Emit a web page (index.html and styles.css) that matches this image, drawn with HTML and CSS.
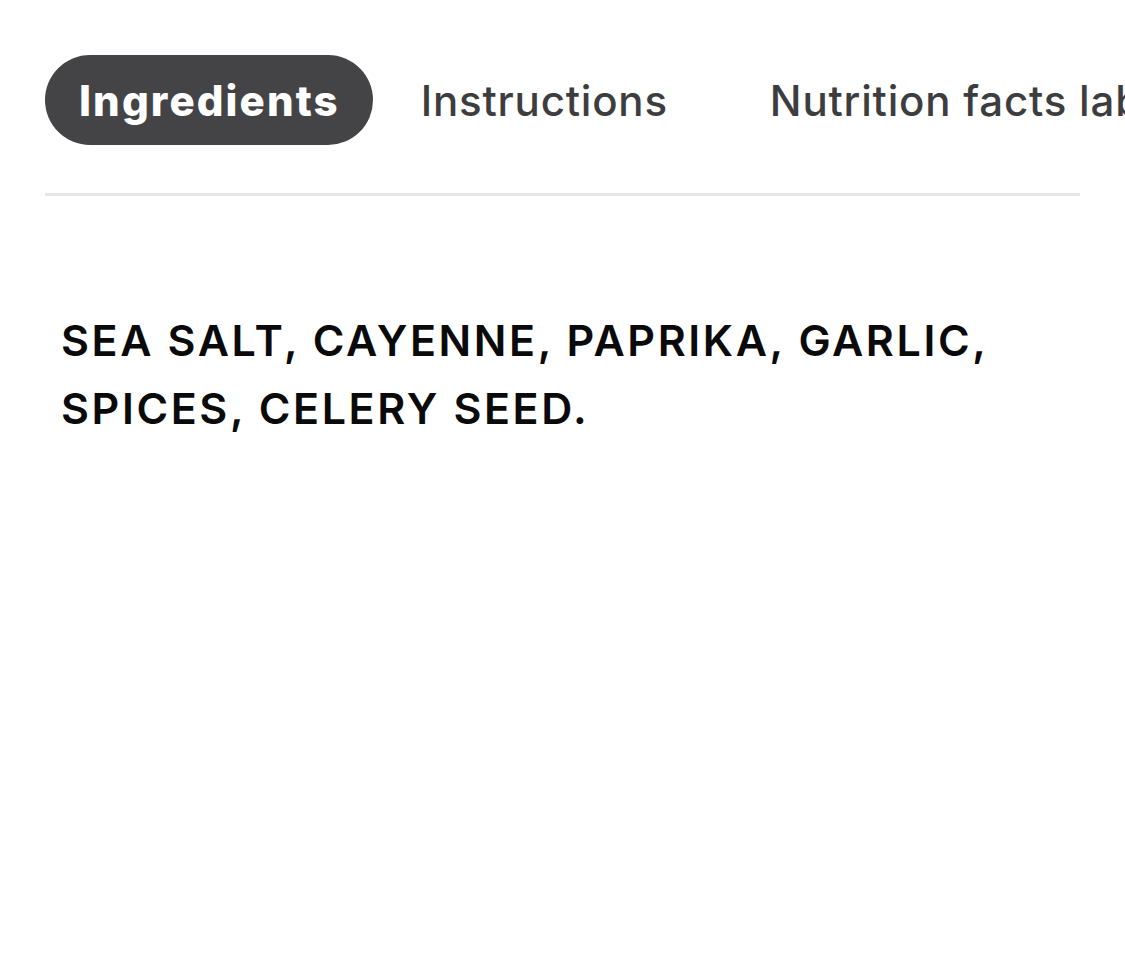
FILE: index.html
```html
<!DOCTYPE html>
<html lang="en">
<head>
<meta charset="utf-8">
<title>Product details</title>
<link rel="stylesheet" href="styles.css">
</head>
<body>
<div class="page">
  <nav class="tabs">
    <span class="tab tab-active">Ingredients</span>
    <span class="tab">Instructions</span>
    <span class="tab tab-wide">Nutrition facts label</span>
  </nav>
  <div class="divider"></div>
  <p class="ingredients">SEA SALT, CAYENNE, PAPRIKA, GARLIC, SPICES, CELERY SEED.</p>
</div>
</body>
</html>
```

FILE: styles.css
```css
html, body {
  margin: 0;
  padding: 0;
  background: #ffffff;
  overflow: hidden;
}
body {
  width: 1125px;
  height: 964px;
  font-family: Inter, "Noto Sans", sans-serif;
}
.page {
  padding: 55px 45px 0 45px;
}
.tabs {
  display: flex;
  align-items: center;
  gap: 14px;
  white-space: nowrap;
  margin-right: -45px;
  overflow: hidden;
}
.tab {
  flex: none;
  height: 90px;
  display: flex;
  align-items: center;
  padding: 0 34px;
  border-radius: 45px;
  font-size: 42px;
  font-weight: 500;
  color: #3d3d40;
  letter-spacing: 0.8px;
}
.tab-active {
  background: #444446;
  color: #ffffff;
  font-weight: 800;
  letter-spacing: 2.1px;
  padding: 0 33px 0 34px;
}
.tab-wide {
  margin-left: 20px;
}
.divider {
  margin-top: 48px;
  height: 3px;
  background: #e6e6e6;
}
.ingredients {
  margin: 110px 0 0 0;
  padding: 0 40px 0 16px;
  font-size: 43px;
  line-height: 68px;
  font-weight: 600;
  color: #0a0a0a;
  letter-spacing: 2.6px;
}
```
